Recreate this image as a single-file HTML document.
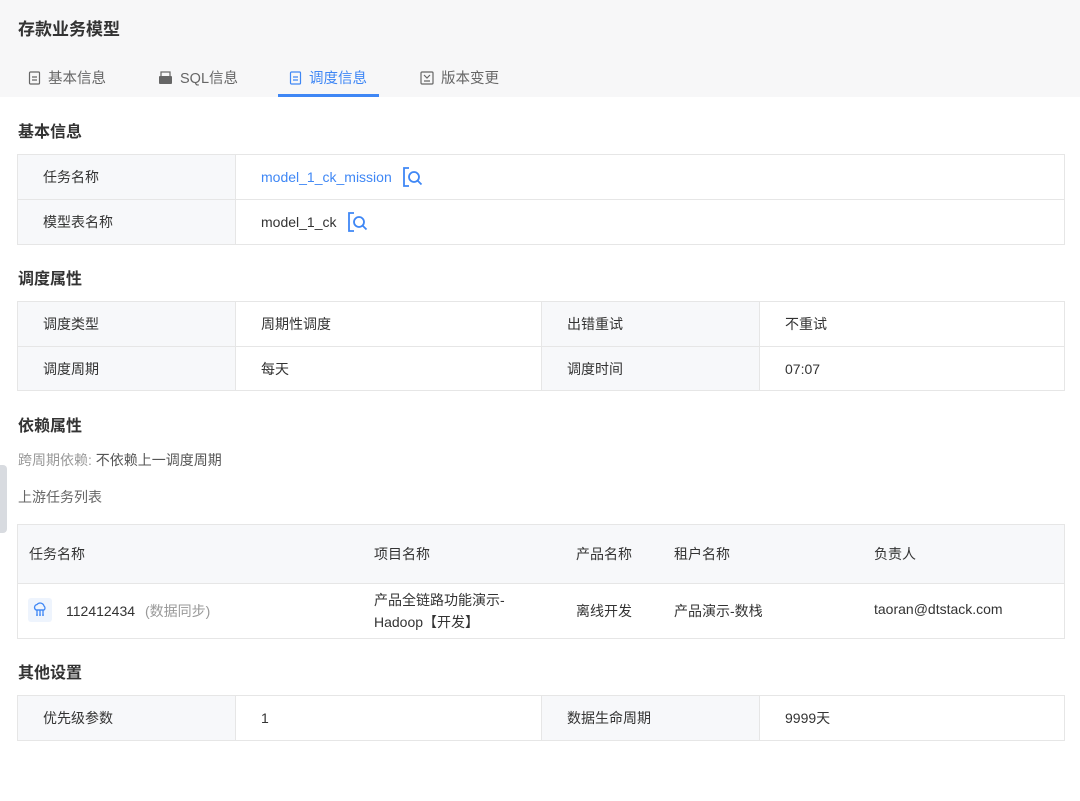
<!DOCTYPE html>
<html><head><meta charset="utf-8"><style>
*{margin:0;padding:0;box-sizing:border-box}
body{width:1080px;height:801px;background:#fff;font-family:"Liberation Sans","Noto Sans CJK SC",sans-serif;color:#333;font-size:14px;position:relative;overflow:hidden}
.a{position:absolute;white-space:nowrap}
.hd{position:absolute;left:0;top:0;width:1080px;height:97px;background:#f7f7f8}
.t{font-size:16px;font-weight:bold;color:#333}
.tab{font-size:14.5px;color:#666;top:67px}
.tab svg{margin-right:7px}
.box{position:absolute;border:1px solid #e6e6e6}
.cell{position:absolute;display:flex;align-items:center;padding-left:25px;border-right:1px solid #e6e6e6;border-bottom:1px solid #e6e6e6}
.lb{background:#f7f8fa;color:#333}
</style></head><body>
<div class="hd"></div>
<div class="a" style="left:18px;top:15px;font-size:17px;font-weight:bold;color:#333">存款业务模型</div>
<div class="a tab" style="left:28px">
<svg width="13" height="14" viewBox="0 0 13 14" style="vertical-align:-2px"><rect x="1.5" y="1" width="10" height="12" rx="1" fill="none" stroke="#666" stroke-width="1.2"/><path d="M4 6h5M4 9h5" stroke="#666" stroke-width="1.2"/></svg>基本信息</div>
<div class="a tab" style="left:158px">
<svg width="15" height="14" viewBox="0 0 15 14" style="vertical-align:-2px"><rect x="1" y="5" width="13" height="8" rx="1" fill="#666"/><rect x="3" y="1" width="9" height="5" fill="none" stroke="#666" stroke-width="1.2"/></svg>SQL信息</div>
<div class="a tab" style="left:289px;color:#3f87f5">
<svg width="13" height="14" viewBox="0 0 13 14" style="vertical-align:-2px"><rect x="1.5" y="1" width="10" height="12" rx="1" fill="none" stroke="#3f87f5" stroke-width="1.2"/><path d="M4 6h5M4 9h5" stroke="#3f87f5" stroke-width="1.2"/></svg>调度信息</div>
<div style="position:absolute;left:278px;top:94px;width:101px;height:3px;background:#3f87f5"></div>
<div class="a tab" style="left:420px">
<svg width="14" height="14" viewBox="0 0 14 14" style="vertical-align:-2px"><rect x="1" y="1" width="12" height="12" rx="1" fill="none" stroke="#666" stroke-width="1.2"/><path d="M4 4l3 3 3-3M4 10h6" stroke="#666" stroke-width="1.2" fill="none"/></svg>版本变更</div>

<div class="a t" style="left:18px;top:118px">基本信息</div>
<div class="box" style="left:17px;top:154px;width:1048px;height:91px">
<div class="cell lb" style="left:0;top:0;width:218px;height:45px">任务名称</div>
<div class="cell" style="left:218px;top:0;width:828px;height:45px;border-right:none;color:#3f87f5">model_1_ck_mission
<svg width="22" height="22" viewBox="0 0 22 22" style="margin-left:10px"><path d="M7 2H2v18h5" fill="none" stroke="#3f87f5" stroke-width="1.8"/><circle cx="12" cy="11" r="5" fill="none" stroke="#3f87f5" stroke-width="1.8"/><path d="M15.5 14.5l4 4" stroke="#3f87f5" stroke-width="1.8"/></svg></div>
<div class="cell lb" style="left:0;top:45px;width:218px;height:44px;border-bottom:none">模型表名称</div>
<div class="cell" style="left:218px;top:45px;width:828px;height:44px;border:none">model_1_ck
<svg width="22" height="22" viewBox="0 0 22 22" style="margin-left:10px"><path d="M7 2H2v18h5" fill="none" stroke="#3f87f5" stroke-width="1.8"/><circle cx="12" cy="11" r="5" fill="none" stroke="#3f87f5" stroke-width="1.8"/><path d="M15.5 14.5l4 4" stroke="#3f87f5" stroke-width="1.8"/></svg></div>
</div>

<div class="a t" style="left:18px;top:265px">调度属性</div>
<div class="box" style="left:17px;top:301px;width:1048px;height:90px">
<div class="cell lb" style="left:0;top:0;width:218px;height:45px">调度类型</div>
<div class="cell" style="left:218px;top:0;width:306px;height:45px">周期性调度</div>
<div class="cell lb" style="left:524px;top:0;width:218px;height:45px">出错重试</div>
<div class="cell" style="left:742px;top:0;width:304px;height:45px;border-right:none">不重试</div>
<div class="cell lb" style="left:0;top:45px;width:218px;height:43px;border-bottom:none">调度周期</div>
<div class="cell" style="left:218px;top:45px;width:306px;height:43px;border-bottom:none">每天</div>
<div class="cell lb" style="left:524px;top:45px;width:218px;height:43px;border-bottom:none">调度时间</div>
<div class="cell" style="left:742px;top:45px;width:304px;height:43px;border:none">07:07</div>
</div>

<div class="a t" style="left:18px;top:412px">依赖属性</div>
<div class="a" style="left:18px;top:450px;color:#999">跨周期依赖: <span style="color:#555">不依赖上一调度周期</span></div>
<div class="a" style="left:18px;top:487px;color:#666">上游任务列表</div>
<div style="position:absolute;left:0;top:465px;width:7px;height:68px;background:#d8dbe0;border-radius:0 4px 4px 0"></div>

<div class="box" style="left:17px;top:524px;width:1048px;height:115px">
<div style="position:absolute;left:0;top:0;width:1046px;height:59px;background:#f7f8fa;border-bottom:1px solid #e6e6e6"></div>
<div class="a" style="left:11px;top:19px">任务名称</div>
<div class="a" style="left:356px;top:19px">项目名称</div>
<div class="a" style="left:558px;top:19px">产品名称</div>
<div class="a" style="left:656px;top:19px">租户名称</div>
<div class="a" style="left:856px;top:19px">负责人</div>
<div style="position:absolute;left:10px;top:73px;width:24px;height:24px;background:#eef4fd;border-radius:3px"></div>
<svg class="a" style="left:14px;top:77px" width="16" height="16" viewBox="0 0 16 16"><path d="M4 8a3 3 0 0 1 1-5.5a4 4 0 0 1 7 1.5a2.5 2.5 0 0 1 0 4z" fill="none" stroke="#3f87f5" stroke-width="1.3"/><path d="M5 8v4M8 8v4M11 8v4M4 8h8" stroke="#3f87f5" stroke-width="1.3"/><circle cx="5" cy="13" r="1" fill="#3f87f5"/><circle cx="8" cy="13" r="1" fill="#3f87f5"/><circle cx="11" cy="13" r="1" fill="#3f87f5"/></svg>
<div class="a" style="left:48px;top:76px">112412434 <span style="color:#999;margin-left:6px">(数据同步)</span></div>
<div class="a" style="left:356px;top:64px;line-height:22px">产品全链路功能演示-<br>Hadoop【开发】</div>
<div class="a" style="left:558px;top:76px">离线开发</div>
<div class="a" style="left:656px;top:76px">产品演示-数栈</div>
<div class="a" style="left:856px;top:76px">taoran@dtstack.com</div>
</div>

<div class="a t" style="left:18px;top:659px">其他设置</div>
<div class="box" style="left:17px;top:695px;width:1048px;height:46px">
<div class="cell lb" style="left:0;top:0;width:218px;height:44px;border-bottom:none">优先级参数</div>
<div class="cell" style="left:218px;top:0;width:306px;height:44px;border-bottom:none">1</div>
<div class="cell lb" style="left:524px;top:0;width:218px;height:44px;border-bottom:none">数据生命周期</div>
<div class="cell" style="left:742px;top:0;width:304px;height:44px;border:none">9999天</div>
</div>
</body></html>
